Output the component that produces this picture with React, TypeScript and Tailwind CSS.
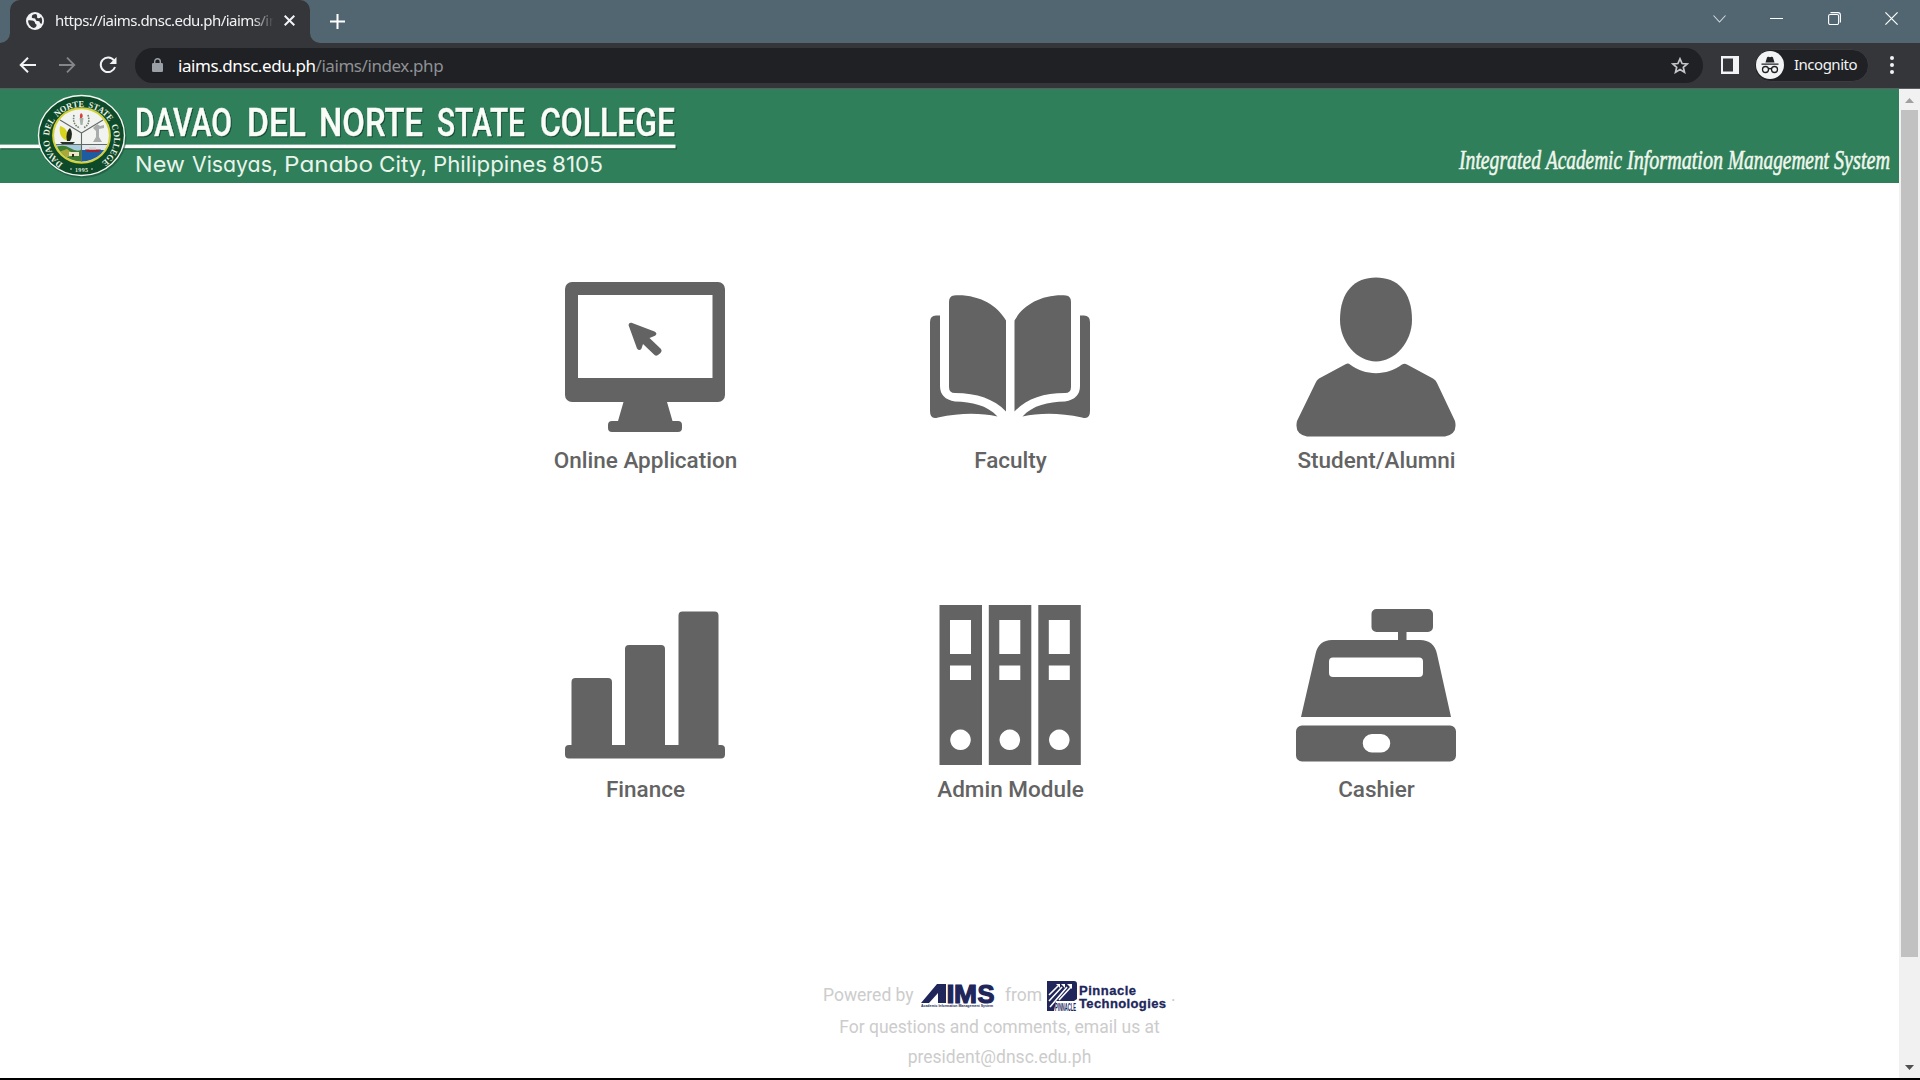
import React from "react";

type Word = { t: string; x: number; w: number };

const titleWords: Word[] = [
  { t: "DAVAO", x: 135, w: 97 },
  { t: "DEL", x: 247, w: 59 },
  { t: "NORTE", x: 319, w: 104 },
  { t: "STATE", x: 437, w: 88 },
  { t: "COLLEGE", x: 540, w: 135 },
];

const addressWords: Word[] = [
  { t: "New", x: 135, w: 50 },
  { t: "Visayas,", x: 192, w: 86 },
  { t: "Panabo", x: 284, w: 89 },
  { t: "City,", x: 379, w: 48 },
  { t: "Philippines", x: 433, w: 114 },
  { t: "8105", x: 552, w: 51 },
];

const systemWords: Word[] = [
  { t: "Integrated", x: 19, w: 82 },
  { t: "Academic", x: 106, w: 76 },
  { t: "Information", x: 187, w: 96 },
  { t: "Management", x: 288, w: 101 },
  { t: "System", x: 394, w: 56 },
];

function Words({ words, y }: { words: Word[]; y: number }) {
  return (
    <>
      {words.map((w) => (
        <text key={w.t} x={w.x} y={y} textLength={w.w} lengthAdjust="spacingAndGlyphs">
          {w.t}
        </text>
      ))}
    </>
  );
}

function Seal() {
  return (
    <g>
      <ellipse cx="82.5" cy="48" rx="44" ry="41" fill="#1c5038" opacity="0.6" />
      <ellipse cx="81.5" cy="46.5" rx="43" ry="40" fill="#0d4a2a" stroke="#f4f7f2" strokeWidth="1.4" />
      <path id="ring" d="M63 74.500 A32.500 31 0 1 1 100 74.500" fill="none" />
      <text className="font-['Liberation_Serif'] text-[9px] font-bold [word-spacing:2px]" fill="#eef2e6">
        <textPath href="#ring" textLength="158" lengthAdjust="spacingAndGlyphs">DAVAO DEL NORTE STATE COLLEGE</textPath>
      </text>
      <text x="75" y="83" textLength="13" className="font-['Liberation_Serif'] text-[6px] font-bold" fill="#dfe8d8">1995</text>
      <circle cx="71" cy="80" r="0.8" fill="#dfe8d8" />
      <circle cx="92" cy="80" r="0.8" fill="#dfe8d8" />
      <ellipse cx="81.5" cy="46.500" rx="28.400" ry="27.200" fill="#f1f3f1" stroke="#d4d136" strokeWidth="2" />
      <clipPath id="shield">
        <ellipse cx="81.5" cy="46.5" rx="27.2" ry="26" />
      </clipPath>
      <g clipPath="url(#shield)">
        <rect x="52" y="56" width="30" height="20" fill="#3d7c33" />
        <path d="M52 60 Q62 54 70 59 T82 60 V56 H52Z" fill="#a4c8dc" />
        <path d="M56 64 L67 60 L75 66 L64 69Z" fill="#a9a83b" />
        <rect x="69" y="63" width="10" height="4" fill="#ece5c8" />
        <rect x="72" y="65" width="2" height="3" fill="#3c2b22" />
        <rect x="82" y="56" width="30" height="6" fill="#dfe9ef" />
        <rect x="82" y="61" width="30" height="16" fill="#1d5ca0" />
        <path d="M85 60.5 H101 L99 63 H87Z" fill="#9c2430" />
        <path d="M89 58 h7 v2.5 h-7z" fill="#d8d8d8" />
        <path d="M54 55.500 H110 M81.5 44 V74 M81.5 44 L60 31 M81.5 44 L103 31" stroke="#626a63" strokeWidth="1.1" />
      </g>
      <path d="M60 37 Q69 39 68 52 Q58 49 60 37Z" fill="#d8d41e" />
      <path d="M67 52 Q65 43 70 39 Q74 45 70 52Z" fill="#20281d" />
      <path d="M60 53 h15 l-2 2 h-11z" fill="#27312a" />
      <path d="M93 39 l4 -4 3 2 4 -1 v3 l-5 1 v8 l3 5 h-9 l3 -5 v-6z" fill="#a8adab" />
      <path d="M74 26 Q72 36 80 39 M88 26 Q91 36 83 39" stroke="#72806f" strokeWidth="1.6" strokeDasharray="1.6 1" fill="none" />
      <path d="M81 24 Q84 26 82 29 H80 Q79 26 81 24Z" fill="#d5443b" />
      <path d="M79.5 29 h4 l-1 7 h-2z" fill="#a7b3aa" />
    </g>
  );
}

function Banner() {
  return (
    <header className="flex h-[94px] w-full justify-between overflow-hidden bg-[#2f7f5b]">
      <svg width="690" height="94" viewBox="0 0 690 94">
        <rect x="1" y="57.500" width="676" height="3" fill="#1b4e38" opacity="0.7" />
        <rect x="0" y="55.600" width="675.500" height="3.600" fill="#fbfdfb" />
        <Seal />
        <g
          className="font-['Roboto'] text-[38px] font-medium drop-shadow-[1.5px_1.5px_0.5px_rgba(18,60,40,0.8)]"
          fill="#fafcf8"
          stroke="#fafcf8"
          strokeWidth="0.4"
        >
          <Words words={titleWords} y={46.5} />
        </g>
        <g className="font-['Inter'] text-[22px] [font-feature-settings:'cv11']" fill="#eaf4ea">
          <Words words={addressWords} y={82.5} />
        </g>
      </svg>
      <svg width="459" height="94" viewBox="0 0 459 94">
        <g className="font-['Liberation_Serif'] text-[27px] italic" fill="#f0f6ec" stroke="#f0f6ec" strokeWidth="0.6">
          <Words words={systemWords} y={80} />
        </g>
      </svg>
    </header>
  );
}

const icons: Record<string, React.ReactNode> = {
  monitor: (
    <>
      <path fillRule="evenodd" d="M7 5 H153 a7 7 0 0 1 7 7 V118 a7 7 0 0 1 -7 7 H102 L107.5 144 H113 a4 4 0 0 1 4 4 V151 a4 4 0 0 1 -4 4 H47 a4 4 0 0 1 -4 -4 V148 a4 4 0 0 1 4 -4 H53 L58.500 125 H7 a7 7 0 0 1 -7 -7 V12 a7 7 0 0 1 7 -7Z M13 18 V101 H147.500 V18Z" />
      <path d="M63.500 48 Q64 45.300 66.500 45.800 L89.500 54.500 Q93 56.500 90 58.800 L84.500 61 L96 72 Q97.500 74 95.500 76 L93 78 Q90.500 79.500 89 77.500 L78 67 L76.500 71.500 Q74.500 74.500 72 71.500Z" />
    </>
  ),
  book: (
    <>
      <path d="M24 18.500 C48 17 67 28 76 43.500 V134.500 C64 122 47 116 25 116 Q19 116 19 110 V25 Q19 19 24 18.500Z" />
      <path d="M136 18.500 C112 17 93 28 84.500 43.500 V134.500 C96 122 113 116 135 116 Q141 116 141 110 V25 Q141 19 136 18.500Z" />
      <path d="M10 38.500 H6 Q0 38.500 0 45 V134 Q0 143 8 140.500 C31 135.500 51 136 67.500 139.500 C57 128 42 125 25 124.500 Q10 122 10 109Z" />
      <path d="M150 38.500 H154 Q160 38.500 160 45 V134 Q160 143 152 140.500 C129 135.500 109 136 92.500 139.500 C103 128 118 125 135 124.500 Q150 122 150 109Z" />
    </>
  ),
  person: (
    <>
      <path d="M80 0.500 C101 0.500 116 14 116 43 C116 65 99 84.500 80 84.500 C61 84.500 44 65 44 43 C44 14 59 0.500 80 0.500Z" />
      <path d="M50 87 Q52.500 86 54 87.500 C69 99 91 99 106 87.500 Q108.500 86 111 87.500 L137 101.500 Q140 103 141 106 L159 144 Q162 157 149 159.500 H11 Q-2 157 1 144 L19.500 106 Q20.500 103 23 101.500Z" />
    </>
  ),
  bars: (
    <path d="M4 140 H6.500 V77 a4 4 0 0 1 4 -4 H43 a4 4 0 0 1 4 4 V140 H60 V44 a4 4 0 0 1 4 -4 H96 a4 4 0 0 1 4 4 V140 H113.500 V10.500 a4 4 0 0 1 4 -4 H149.500 a4 4 0 0 1 4 4 V140 H156 a4 4 0 0 1 4 4 V149.500 a4 4 0 0 1 -4 4 H4 a4 4 0 0 1 -4 -4 V144 a4 4 0 0 1 4 -4Z" />
  ),
  binders: (
    <>
      {[9.5, 58.8, 108.3].map((x) => (
        <path
          key={x}
          transform={`translate(${x} 0)`}
          fillRule="evenodd"
          d="M0 0 H42.500 V160 H0Z M10.500 15 V49 H31.500 V15Z M10.500 60.500 V75 H31.500 V60.500Z M21 124.500 a10.300 10.300 0 1 0 0.010 0Z"
        />
      ))}
    </>
  ),
  register: (
    <>
      <path fillRule="evenodd" d="M80 4 H132 a5 5 0 0 1 5 5 V22 a5 5 0 0 1 -5 5 H110.500 V35 H124 Q138 35 141 49 L155 112 H5 L19.500 49 Q22.500 35 36 35 H102 V27 H80.500 a5 5 0 0 1 -5 -5 V9 a5 5 0 0 1 5 -5Z M37 52.500 a4 4 0 0 0 -4 4 V68 a4 4 0 0 0 4 4 H123 a4 4 0 0 0 4 -4 V56.500 a4 4 0 0 0 -4 -4Z" />
      <path fillRule="evenodd" d="M6 120.500 H154 a6 6 0 0 1 6 6 V150.500 a6 6 0 0 1 -6 6 H6 a6 6 0 0 1 -6 -6 V126.500 a6 6 0 0 1 6 -6Z M76 129 a9 9 0 0 0 0 18.500 H85 a9 9 0 0 0 0 -18.500Z" />
    </>
  ),
};

function Module({ icon, label }: { icon: string; label: string }) {
  return (
    <a className="flex flex-col items-center gap-[inherit]">
      <svg width="160" height="160" viewBox="0 0 160 160" fill="#636363">
        {icons[icon]}
      </svg>
      <span className="pl-px text-[22.5px] leading-[34px] font-medium whitespace-nowrap text-[#636363]">{label}</span>
    </a>
  );
}

function AimsLogo() {
  return (
    <svg width="76" height="28" viewBox="0 0 76 28" fill="#20265a">
      <path d="M1 22 L17 3 H26 V22 H18 V12 L9 22Z" />
      <g className="font-['Liberation_Sans'] text-[26px] font-bold" stroke="#20265a" strokeWidth="1.2">
        <text x="26.500" y="21.500" textLength="8" lengthAdjust="spacingAndGlyphs">I</text>
        <text x="34" y="21.500" textLength="23" lengthAdjust="spacingAndGlyphs">M</text>
        <text x="57.500" y="21.500" textLength="17" lengthAdjust="spacingAndGlyphs">S</text>
      </g>
      <text x="1" y="26" textLength="72" lengthAdjust="spacingAndGlyphs" className="font-['Liberation_Sans'] text-[3.5px] font-bold">
        Academic Information Management System
      </text>
    </svg>
  );
}

function PinnacleLogo() {
  return (
    <svg className="mt-[2px]" width="122" height="32" viewBox="0 0 122 32" fill="#20265a">
      <path d="M1 1 H28 Q31 1 31 4 V19 L28 21 H10 L8 31 H1Z" />
      <path d="M3 15 L12 6 M3 21 L16 7 M4 27 L21 7 M13 20 L25 7" stroke="#fff" strokeWidth="1.6" />
      <path d="M10 4 h4 v4z M15 4 h4 v4z M21 4 h5 v5z" fill="#fff" />
      <text x="9" y="30.500" textLength="21" lengthAdjust="spacingAndGlyphs" className="font-['Liberation_Sans'] text-[10px] font-bold">PINNACLE</text>
      <g className="font-['Liberation_Sans'] text-[13px] font-bold" stroke="#20265a" strokeWidth="0.3">
        <text x="33" y="15" textLength="57" lengthAdjust="spacing">Pinnacle</text>
        <text x="33" y="27.500" textLength="87" lengthAdjust="spacing">Technologies</text>
      </g>
    </svg>
  );
}

function TabStrip() {
  return (
    <div className="flex h-[43px] w-full bg-[#526672]">
      <div className="flex h-full w-[10px] items-end bg-[#35363a]">
        <div className="h-full w-full rounded-br-[10px] bg-[#526672]" />
      </div>
      <div className="h-full w-[300px] bg-[#526672]">
        <div className="flex h-full items-center rounded-t-[10px] bg-[#35363a] pb-[2px] pl-4">
          <svg width="18" height="18" viewBox="0 0 18 18">
            <circle cx="9" cy="9" r="9" fill="#f1f3f4" />
            <path d="M10.200 2 Q5.500 2 5.800 5.200 Q6 6.500 8 6.200 Q9.500 6 9.700 7.700 Q10 9.300 12 9 Q14 9.200 14 11 L15.500 12 Q17 8 15 5 Q13.500 6.800 11.500 6 Q10.500 5.500 11.200 4Z" fill="#35363a" />
            <path d="M2 8.500 Q3 8 6 8.500 Q9 9 9 11 Q9.300 12.300 10.500 12.500 V14 Q9.500 16 7.500 16 Q2.500 14.500 2 8.500Z" fill="#35363a" />
          </svg>
          <div className="ml-[11px] w-[219px] overflow-hidden [mask-image:linear-gradient(to_right,black_90%,transparent)]">
            <span className="block text-[15px] tracking-[-0.55px] whitespace-nowrap text-[#f1f3f4]">https://iaims.dnsc.edu.ph/iaims/index.php</span>
          </div>
          <svg className="ml-[10px]" width="11" height="11" viewBox="0 0 11 11" stroke="#f1f3f4" strokeWidth="2">
            <path d="M0.700 0.700 L10.300 10.300 M10.300 0.700 L0.700 10.300" />
          </svg>
        </div>
      </div>
      <div className="flex h-full w-[10px] bg-[#35363a]">
        <div className="h-full w-full rounded-bl-[10px] bg-[#526672]" />
      </div>
      <svg className="mt-[14px] ml-[10px]" width="15" height="15" viewBox="0 0 15 15" stroke="#fff" strokeWidth="2">
        <path d="M7.500 0 V15 M0 7.500 H15" />
      </svg>
      <div className="mr-[22px] ml-auto flex h-[37px] items-center gap-[44.3px]">
        <svg width="13" height="8" viewBox="0 0 13 8" fill="none" stroke="#d5dade" strokeWidth="1.1">
          <path d="M0.500 0.500 L6.500 7 L12.500 0.500" />
        </svg>
        <div className="h-px w-[13px] bg-white" />
        <svg width="13" height="13" viewBox="0 0 13 13" fill="none" stroke="#fff" strokeWidth="1.1">
          <rect x="0.600" y="2.500" width="10" height="10" rx="1.500" />
          <path d="M2.500 0.600 H10 Q12.400 0.600 12.400 3 V10.500" />
        </svg>
        <svg width="13" height="13" viewBox="0 0 13 13" stroke="#fff" strokeWidth="1.200">
          <path d="M0.400 0.400 L12.600 12.600 M12.600 0.400 L0.400 12.600" />
        </svg>
      </div>
    </div>
  );
}

function Toolbar() {
  return (
    <div className="flex h-[46px] w-full items-center border-b border-[#5d5e62] bg-[#35363a] pb-px">
      <svg className="ml-[19px]" width="17" height="16" viewBox="0 0 17 16" fill="none" stroke="#f1f3f4" strokeWidth="2">
        <path d="M17 8 H2 M9 0.700 L1.700 8 L9 15.300" />
      </svg>
      <svg className="ml-[23px]" width="17" height="16" viewBox="0 0 17 16" fill="none" stroke="#85868a" strokeWidth="1.800">
        <path d="M0 8 H15 M8 0.700 L15.300 8 L8 15.300" />
      </svg>
      <svg className="ml-[23px]" width="18" height="18" viewBox="0 0 18 18">
        <path d="M15 4.500 A7.300 7.300 0 1 0 16 11" fill="none" stroke="#f1f3f4" strokeWidth="2" />
        <path d="M17.500 1 V8 H10.500Z" fill="#f1f3f4" />
      </svg>
      <div className="ml-[18px] flex h-[35px] w-[1568px] items-center rounded-full bg-[#202124]">
        <svg className="ml-[17px]" width="11" height="14" viewBox="0 0 11 14">
          <rect y="5" width="11" height="9" rx="1.200" fill="#9aa0a6" />
          <path d="M2.700 5.500 V3.500 a2.800 2.800 0 0 1 5.600 0 V5.500" fill="none" stroke="#9aa0a6" strokeWidth="1.400" />
        </svg>
        <div className="mt-px ml-[15px] text-[17px] tracking-[-0.43px] whitespace-nowrap text-white">
          iaims.dnsc.edu.ph<span className="text-[#8e9195]">/iaims/index.php</span>
        </div>
        <svg className="mr-[14px] ml-auto" width="18" height="17" viewBox="0 0 18 17" fill="none" stroke="#c4c7c9" strokeWidth="1.700">
          <path d="M9 1.800 L11.100 6.500 L16.200 7 L12.300 10.300 L13.500 15.300 L9 12.600 L4.500 15.300 L5.700 10.300 L1.800 7 L6.900 6.500Z" />
        </svg>
      </div>
      <svg className="ml-[18px]" width="18" height="18" viewBox="0 0 18 18">
        <rect width="18" height="18" fill="#f1f3f4" />
        <rect x="2" y="2.500" width="10" height="13" fill="#35363a" />
      </svg>
      <div className="ml-[15px] flex h-[33px] w-[115px] items-center rounded-full border border-[#3b3c40] bg-[#202124]">
        <svg className="ml-px shrink-0" width="28" height="28" viewBox="0 0 28 28">
          <circle cx="14" cy="14" r="14" fill="#f1f3f4" />
          <path d="M9.500 11.500 L11 6.500 Q11.500 5.500 12.500 5.800 L14 6.300 L15.500 5.800 Q16.500 5.500 17 6.500 L18.500 11.500Z M5.500 12.500 h17 v1.200 h-17z" fill="#202124" />
          <g fill="none" stroke="#202124" strokeWidth="1.300">
            <circle cx="9.500" cy="18.500" r="3" />
            <circle cx="18.500" cy="18.500" r="3" />
            <path d="M12.500 18 Q14 17 15.500 18" />
          </g>
        </svg>
        <span className="-mt-px ml-[10px] text-[15px] tracking-[-0.5px] text-[#f1f3f4]">Incognito</span>
      </div>
      <div className="ml-[21px] flex flex-col gap-[3px]">
        <div className="size-1 rounded-full bg-[#f1f3f4]" />
        <div className="size-1 rounded-full bg-[#f1f3f4]" />
        <div className="size-1 rounded-full bg-[#f1f3f4]" />
      </div>
    </div>
  );
}

export default function App() {
  return (
    <div className="flex h-[1080px] w-[1920px] flex-col overflow-hidden bg-white">
      <div className="font-['Noto_Sans','Open_Sans',sans-serif]">
        <TabStrip />
        <Toolbar />
      </div>
      <div className="flex h-[989px] w-full">
        <main className="flex w-[1899px] flex-col font-['Roboto',sans-serif]">
          <Banner />
          <div className="ml-[462.500px] grid grid-cols-[365px_365px_367px] gap-x-0 gap-y-[6px] pt-[94px]">
            <Module icon="monitor" label="Online Application" />
            <Module icon="book" label="Faculty" />
            <Module icon="person" label="Student/Alumni" />
          </div>
          <div className="ml-[462.500px] grid grid-cols-[365px_365px_367px] gap-x-0 gap-y-[7px] pt-[128px]">
            <Module icon="bars" label="Finance" />
            <Module icon="binders" label="Admin Module" />
            <Module icon="register" label="Cashier" />
          </div>
          <footer className="mt-[173px] ml-[100px] w-[1800px] text-[17.5px] leading-[30px] text-[#ccc]">
            <div className="ml-[723px] flex h-[32px] items-center">
              <span className="w-[97px] whitespace-nowrap">Powered by</span>
              <AimsLogo />
              <span className="ml-[9px] w-[41px]">from</span>
              <PinnacleLogo />
              <span className="ml-[3px]">.</span>
            </div>
            <p className="mt-px w-[1799px] text-center">For questions and comments, email us at</p>
            <p className="w-[1799px] text-center">president@dnsc.edu.ph</p>
          </footer>
        </main>
        <aside className="flex w-[21px] flex-col items-center bg-[#f1f1f1]">
          <svg className="mt-[9px]" width="9" height="5" viewBox="0 0 9 5">
            <path d="M0 5 L4.500 0 L9 5Z" fill="#a0a0a0" />
          </svg>
          <div className="mt-[7px] h-[847px] w-[17px] bg-[#c1c1c1]" />
          <svg className="mt-auto mb-[8px]" width="9" height="5" viewBox="0 0 9 5">
            <path d="M0 0 L4.500 5 L9 0Z" fill="#505050" />
          </svg>
        </aside>
      </div>
      <div className="h-[2px] w-full bg-black" />
    </div>
  );
}
